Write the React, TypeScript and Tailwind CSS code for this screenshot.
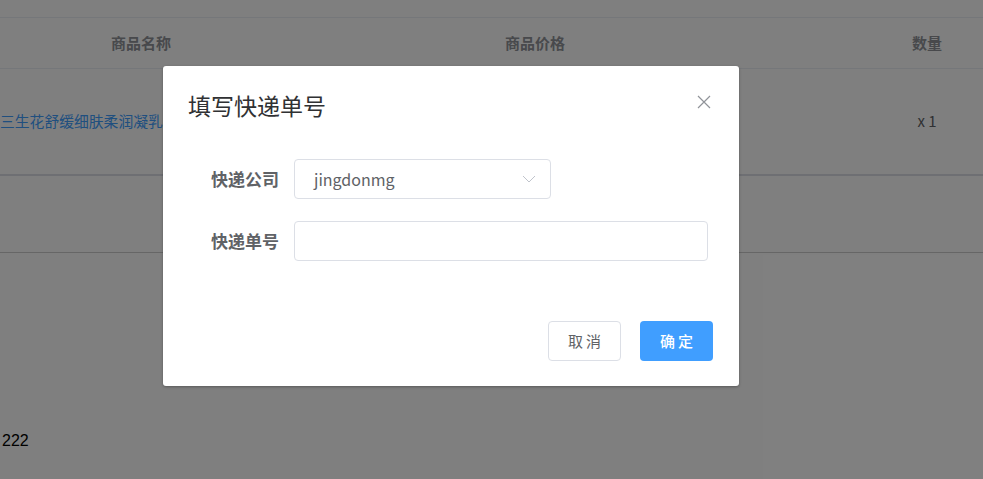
import React from "react";

const F = { fontFamily: '"Noto Sans CJK SC", "Noto Sans", sans-serif' };

export default function App() {
  return (
    <div className="relative w-[983px] h-[479px] overflow-hidden bg-white" style={F}>
      {/* underlying page */}
      <div className="h-[17px]" />
      <div className="border-t border-[#EBEEF5]">
        <div className="flex h-[50px] items-center text-[15px] font-bold text-[#909399]">
          <div className="w-[282px] text-center">商品名称</div>
          <div className="w-[506px] text-center">商品价格</div>
          <div className="w-[83px]" />
          <div className="w-[112px] text-center">数量</div>
        </div>
        <div className="flex h-[108px] items-center border-t border-b-2 border-[#EBEEF5] border-b-[#DCDFE6] text-[15px]">
          <div className="w-[282px]">
            <div className="whitespace-nowrap text-[#409EFF] text-[14.8px]">三生花舒缓细肤柔润凝乳</div>
          </div>
          <div className="w-[506px]" />
          <div className="w-[83px]" />
          <div className="w-[112px] text-center text-[#606266] text-[15px]">x 1</div>
        </div>
        <div className="h-[77px] border-b border-[#CCCCCC]" />
      </div>
      <div className="pt-[179px] pl-[2px] text-[16px] leading-[18px] text-black" style={{ fontFamily: '"Liberation Sans", Arial, sans-serif' }}>
        222
      </div>

      {/* overlay */}
      <div className="absolute inset-0 bg-black/50" />

      {/* dialog */}
      <div className="absolute left-[163px] top-[66px] w-[576px] h-[320px] bg-white rounded-[3px] shadow-[0_1px_3px_rgba(0,0,0,0.3)] flex flex-col">
        <div className="flex items-center justify-between pl-[25px] pr-[28px] pt-[10px] h-[68px]">
          <div className="text-[23px] leading-[28px] text-[#303133]">填写快递单号</div>
          <svg width="14" height="14" viewBox="0 0 14 14" className="mt-[-6px]">
            <path d="M1 1 L13 13 M13 1 L1 13" stroke="#909399" strokeWidth="1.2" />
          </svg>
        </div>
        <div className="flex flex-col gap-[22px] pt-[25px]">
          <div className="flex items-center">
            <div className="w-[131px] text-right pr-[15px] text-[17px] font-bold text-[#606266]">快递公司</div>
            <div className="w-[257px] h-[40px] border border-[#DCDFE6] rounded-[4px] flex items-center justify-between pl-[19px] pr-[14px]">
              <span className="text-[16px] text-[#606266]">jingdonmg</span>
              <svg width="14" height="8" viewBox="0 0 14 8">
                <path d="M1 1 L7 7 L13 1" stroke="#C0C4CC" strokeWidth="1" fill="none" />
              </svg>
            </div>
          </div>
          <div className="flex items-center">
            <div className="w-[131px] text-right pr-[15px] text-[17px] font-bold text-[#606266]">快递单号</div>
            <div className="w-[414px] h-[40px] border border-[#DCDFE6] rounded-[4px]" />
          </div>
        </div>
        <div className="flex justify-end gap-[19px] pr-[26px] mt-[60px]">
          <button className="w-[73px] h-[40px] border border-[#DCDFE6] rounded-[4px] bg-white text-[15px] text-[#606266] tracking-[3px] pl-[3px]">取消</button>
          <button className="w-[73px] h-[40px] rounded-[4px] bg-[#409EFF] text-[15px] text-white tracking-[3px] pl-[3px] font-medium">确定</button>
        </div>
      </div>
    </div>
  );
}
